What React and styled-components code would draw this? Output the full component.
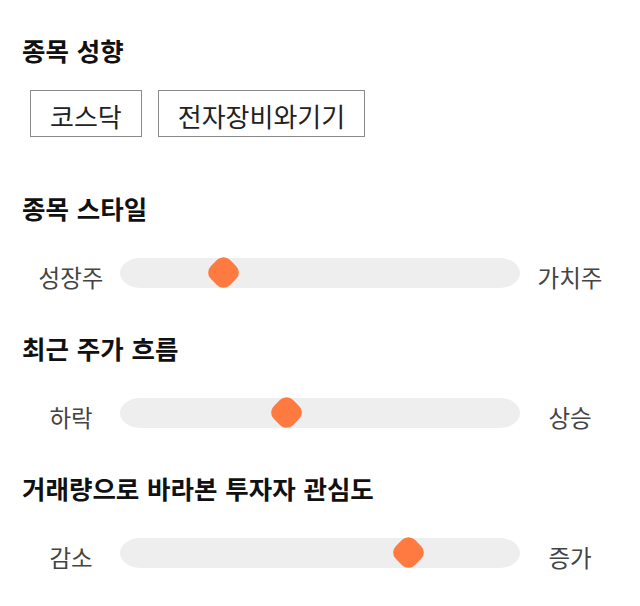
import React from 'react';
import styled, { createGlobalStyle } from 'styled-components';

const GlobalStyle = createGlobalStyle`
    body {
        margin: 0;
        background: #fff;
        font-family: "Noto Sans CJK KR", "Noto Sans", sans-serif;
    }
`;

const Pagina = styled.div`
    width: 640px;
    padding: 33px 20px 20px 22px;
    box-sizing: border-box;
`;

const Secao = styled.section`
    margin-top: ${props => props.$gap || 0}px;
`;

const Titulo = styled.h2`
    margin: 0;
    font-size: 25.5px;
    font-weight: 700;
    line-height: 34px;
    word-spacing: 2px;
    color: #111;
`;

const ListaTags = styled.div`
    display: flex;
    gap: 16px;
    margin-top: 23px;
    padding-left: 8px;
`;

const Tag = styled.div`
    height: 47px;
    box-sizing: border-box;
    display: flex;
    align-items: center;
    padding: 4px 19px 0 19px;
    border: 1px solid #8a8a8a;
    font-size: 26px;
    color: #222;
`;

const LinhaSlider = styled.div`
    display: grid;
    grid-template-columns: 98px 400px 100px;
    align-items: center;
    height: 40px;
    margin-top: 26px;
`;

const Rotulo = styled.span`
    text-align: center;
    font-size: 23.5px;
    color: #444;
    padding-top: 9px;
`;

const Trilho = styled.div`
    position: relative;
    height: 30px;
    background: #eeeeee;
    border-radius: 20px / 15px;
`;

const Polegar = styled.div`
    position: absolute;
    top: 1.5px;
    width: 27px;
    height: 27px;
    margin-left: 1.5px;
    background: #ff7a40;
    border-radius: 9px;
    transform: rotate(45deg);
`;

const estilos = [
    { titulo: '종목 스타일', esquerda: '성장주', direita: '가치주', valor: 24 },
    { titulo: '최근 주가 흐름', esquerda: '하락', direita: '상승', valor: 41 },
    { titulo: '거래량으로 바라본 투자자 관심도', esquerda: '감소', direita: '증가', valor: 74 }
];

function Slider({ esquerda, direita, valor }) {
    return (
        <LinhaSlider>
            <Rotulo>{esquerda}</Rotulo>
            <Trilho>
                <Polegar style={{ left: `${(valor / 100) * 370}px` }} />
            </Trilho>
            <Rotulo>{direita}</Rotulo>
        </LinhaSlider>
    );
}

export default function App() {
    return (
        <Pagina>
            <GlobalStyle />
            <Secao>
                <Titulo>종목 성향</Titulo>
                <ListaTags>
                    <Tag>코스닥</Tag>
                    <Tag>전자장비와기기</Tag>
                </ListaTags>
            </Secao>
            {estilos.map((item, i) => (
                <Secao key={item.titulo} $gap={i === 0 ? 54 : 40}>
                    <Titulo>{item.titulo}</Titulo>
                    <Slider esquerda={item.esquerda} direita={item.direita} valor={item.valor} />
                </Secao>
            ))}
        </Pagina>
    );
}
